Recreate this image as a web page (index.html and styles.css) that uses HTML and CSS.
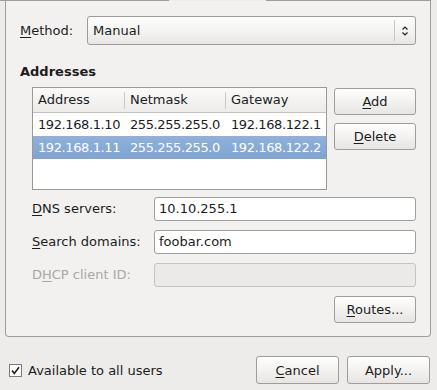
FILE: index.html
```html
<!DOCTYPE HTML>
<html>
<head>
<meta charset="utf-8">
<title>IPv4 Settings</title>
<link rel="stylesheet" href="styles.css">
</head>

<body>
<div class="tabline">
	<span class="edge first"></span>
	<span class="gap"></span>
	<span class="edge rest"></span>
</div>
<div class="frame">
	<div class="method">
		<label class="lbl"><u>M</u>ethod:</label>
		<div class="combo">
			<span class="combo-text">Manual</span>
			<span class="combo-sep"></span>
			<span class="combo-arrow">
				<svg width="8" height="12" viewBox="0 0 8 12"><path d="M1.5 4.5 L4 2 L6.5 4.5 M1.5 7.5 L4 10 L6.5 7.5" fill="none" stroke="#222" stroke-width="1.2"/></svg>
			</span>
		</div>
	</div>

	<h3 class="heading">Addresses</h3>

	<div class="addresses">
		<div class="table">
			<div class="thead">
				<div class="th">Address</div>
				<div class="th">Netmask</div>
				<div class="th">Gateway</div>
			</div>
			<div class="tr">
				<div class="td">192.168.1.10</div>
				<div class="td">255.255.255.0</div>
				<div class="td">192.168.122.1</div>
			</div>
			<div class="tr sel">
				<div class="td">192.168.1.11</div>
				<div class="td">255.255.255.0</div>
				<div class="td">192.168.122.2</div>
			</div>
		</div>
		<div class="side">
			<button class="btn"><u>A</u>dd</button>
			<button class="btn"><u>D</u>elete</button>
		</div>
	</div>

	<div class="form">
		<label class="flbl"><u>D</u>NS servers:</label>
		<div class="entry">10.10.255.1</div>
		<label class="flbl"><u>S</u>earch domains:</label>
		<div class="entry">foobar.com</div>
		<label class="flbl off">D<u>H</u>CP client ID:</label>
		<div class="entry off"></div>
	</div>

	<div class="routes">
		<button class="btn"><u>R</u>outes...</button>
	</div>
</div>

<div class="bottom">
	<label class="check">
		<svg width="13" height="13" viewBox="0 0 13 13"><rect x="0.5" y="0.5" width="12" height="12" fill="#fff" stroke="#7f7c78"/><path d="M3 6.5 L5.3 9.5 L10 3.2" fill="none" stroke="#1e1e1e" stroke-width="1.6"/></svg>
		<span>Available to all users</span>
	</label>
	<div class="actions">
		<button class="btn wide"><u>C</u>ancel</button>
		<button class="btn wide">Apply...</button>
	</div>
</div>
</body>
</html>
```

FILE: styles.css
```css
* {margin:0; padding:0; box-sizing:border-box;}
body {width:437px; height:390px; background:#edeceb; font-family:"DejaVu Sans", sans-serif; font-size:13px; color:#1c1c1c; overflow:hidden;}
u {text-decoration:underline; text-underline-offset:2px;}

.tabline {display:flex; height:1px;}
.tabline .edge {background:#a09d98; height:1px;}
.tabline .first {width:169px;}
.tabline .gap {width:97px;}
.tabline .rest {flex:1; margin-right:6px;}

.frame {margin:0 6px 0 5px; height:336px; border:1px solid #a09d98; border-top:0; border-radius:0 0 4px 4px; background:#f2f1f0; padding:15px 14px 0 14px;}

.method {display:flex; align-items:center; height:29px;}
.lbl {width:67px;}
.combo {flex:1; height:29px; display:flex; align-items:center; border:1px solid #9f9c98; border-radius:3px; background:linear-gradient(#fdfdfd, #f4f4f3 50%, #e7e6e4);}
.combo-text {flex:1; padding-left:5px;}
.combo-sep {width:1px; height:21px; background:#c9c7c3;}
.combo-arrow {width:20px; display:flex; justify-content:center; align-items:center;}

.heading {margin-top:19px; font-size:13px; line-height:16px; font-weight:bold;}

.addresses {margin-top:7px; padding-left:12px; display:flex; gap:7px;}
.table {width:295px; height:103px; border:1px solid #9c9995; background:#fff;}
.thead, .tr {display:grid; grid-template-columns:91px 101px 1fr;}
.thead {height:25px; padding:4px 0 3px; border-bottom:1px solid #c3c1bd; background:linear-gradient(#fafaf9, #ecebe9);}
.th {line-height:16px; padding-left:5px; white-space:nowrap;}
.th + .th {border-left:1px solid #cbc9c5;}
.tr {height:23px; line-height:23px;}
.td {padding-left:6px; letter-spacing:-0.4px; white-space:nowrap; overflow:hidden;}
.td:first-child {padding-left:5px;}
.tr.sel {background:linear-gradient(#8fb1db, #7fa3d2); color:#fff;}

.side {display:flex; flex-direction:column; gap:8px; padding-top:1px;}
.btn {width:82px; height:27px; font-family:inherit; font-size:13px; color:#1c1c1c; border:1px solid #a09d98; border-radius:3px; background:linear-gradient(#fefefe, #f3f2f1 50%, #e6e5e3);}

.form {margin-top:7px; padding-left:12px; display:grid; grid-template-columns:122px 1fr; row-gap:9px;}
.flbl {height:24px; line-height:24px;}
.flbl.off {color:#a9a7a2;}
.entry {height:24px; line-height:22px; padding-left:4px; border:1px solid #a19f9b; border-radius:3px; background:#fff;}
.entry.off {background:#ebeae8; border-color:#c6c4bf;}

.routes {margin-top:9px; display:flex; justify-content:flex-end;}

.bottom {margin-top:19px; height:28px; padding:0 7px 0 9px; display:flex; align-items:center; justify-content:space-between;}
.check {display:flex; align-items:center; gap:6px;}
.check svg {display:block;}
.actions {display:flex; gap:8px;}
.btn.wide {width:83px; height:28px;}
```
